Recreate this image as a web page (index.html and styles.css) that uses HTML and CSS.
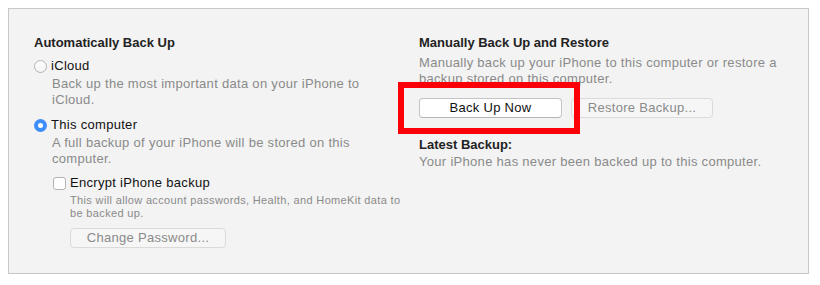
FILE: index.html
```html
<!DOCTYPE html>
<html>
<head>
<meta charset="utf-8">
<link rel="stylesheet" href="styles.css">
</head>
<body>
<div class="panel">
  <section class="col col-left">
    <h2 class="heading">Automatically Back Up</h2>
    <div class="option option-first">
      <span class="radio"></span>
      <span class="label">iCloud</span>
    </div>
    <p class="desc">Back up the most important data on your iPhone to<br>iCloud.</p>
    <div class="option option-second">
      <span class="radio radio-on"></span>
      <span class="label">This computer</span>
    </div>
    <p class="desc">A full backup of your iPhone will be stored on this<br>computer.</p>
    <div class="check-row">
      <span class="checkbox"></span>
      <span class="label">Encrypt iPhone backup</span>
    </div>
    <p class="small">This will allow account passwords, Health, and HomeKit data to<br>be backed up.</p>
    <button class="btn btn-disabled btn-password">Change Password...</button>
  </section>
  <section class="col col-right">
    <h2 class="heading">Manually Back Up and Restore</h2>
    <p class="desc desc-right">Manually back up your iPhone to this computer or restore a<br>backup stored on this computer.</p>
    <div class="btn-row">
      <span class="highlight"></span>
      <button class="btn btn-primary">Back Up Now</button>
      <button class="btn btn-disabled">Restore Backup...</button>
    </div>
    <h2 class="heading heading-latest">Latest Backup:</h2>
    <p class="desc desc-latest">Your iPhone has never been backed up to this computer.</p>
  </section>
</div>
</body>
</html>
```
FILE: styles.css
```css
html, body {
  background: #ffffff;
}
body {
  margin: 8px;
  font-family: "Liberation Sans", Arial, sans-serif;
  font-size: 13px;
  letter-spacing: 0.3px;
  color: #1c1c1c;
}
.panel {
  box-sizing: border-box;
  width: 801px;
  height: 266px;
  border: 1px solid #c8c8c8;
  background: #f3f3f3;
  padding: 26px 0 0 25px;
  display: grid;
  grid-template-columns: 385px 1fr;
}
.col {
  display: flex;
  flex-direction: column;
  align-items: flex-start;
}
.heading {
  margin: 0;
  font-size: 13px;
  font-weight: bold;
  line-height: 16px;
  color: #222222;
  letter-spacing: 0;
}
.option {
  display: flex;
  align-items: center;
  gap: 4px;
  line-height: 16px;
}
.option-first { margin-top: 7px; }
.option-second { margin-top: 9px; }
.label {
  color: #111;
}
.radio {
  box-sizing: border-box;
  width: 13px;
  height: 13px;
  border-radius: 50%;
  border: 1px solid #b3b3b3;
  background: linear-gradient(#ffffff, #f4f4f4);
  display: flex;
  align-items: center;
  justify-content: center;
}
.radio-on {
  border: none;
  background: #3d8ef8;
}
.radio-on::after {
  content: "";
  width: 5px;
  height: 5px;
  border-radius: 50%;
  background: #ffffff;
}
.desc {
  margin: 2px 0 0 18px;
  line-height: 16px;
  color: #8a8a8a;
}
.check-row {
  display: flex;
  align-items: center;
  gap: 4px;
  margin: 8px 0 0 19px;
  line-height: 16px;
}
.checkbox {
  box-sizing: border-box;
  width: 13px;
  height: 13px;
  border: 1px solid #b3b3b3;
  border-radius: 3px;
  background: #ffffff;
}
.small {
  margin: 3px 0 0 36px;
  font-size: 11px;
  line-height: 13px;
  letter-spacing: 0.35px;
  color: #8a8a8a;
}
.btn {
  box-sizing: border-box;
  height: 20px;
  border-radius: 4px;
  font-family: inherit;
  font-size: 13px;
  letter-spacing: 0.3px;
  line-height: 18px;
  padding: 0;
  text-align: center;
}
.btn-primary {
  width: 143px;
  background: #ffffff;
  border: 1px solid #c4c4c4;
  border-bottom-color: #b4b4b4;
  color: #111;
}
.btn-disabled {
  background: #f6f6f6;
  border: 1px solid #dadada;
  color: #8a8a8a;
}
.btn-password {
  width: 156px;
  margin: 8px 0 0 36px;
}
.btn-row .btn-disabled {
  width: 142px;
}
.desc-right {
  margin: 4px 0 0 0;
}
.btn-row {
  position: relative;
  display: flex;
  gap: 9px;
  margin-top: 11px;
}
.highlight {
  position: absolute;
  left: -21px;
  top: -16px;
  width: 182px;
  height: 52px;
  box-sizing: border-box;
  border: 6px solid #fb0007;
  pointer-events: none;
}
.heading-latest {
  margin-top: 19px;
}
.desc-latest {
  margin: 1px 0 0 0;
}
```
